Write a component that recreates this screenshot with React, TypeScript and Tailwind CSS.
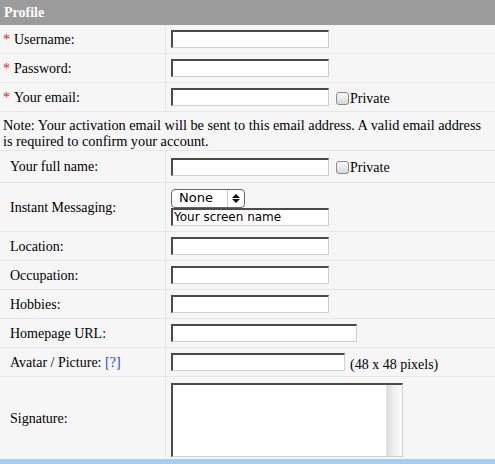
import React from "react";

const serif = { fontFamily: '"Liberation Serif", "Times New Roman", serif' };
const sans = { fontFamily: '"DejaVu Sans", "Liberation Sans", sans-serif' };

function Input({ w = 158, children }: { w?: number; children?: React.ReactNode }) {
  return (
    <div
      className="h-[18px] bg-white border border-t-[#4a4a4a] border-l-[#4a4a4a] border-b-[#cfcfcf] border-r-[#cfcfcf] border-t-2 border-l-2 text-[12px] leading-[14px] pl-[1px] text-black"
      style={{ width: w, ...sans }}
    >
      {children}
    </div>
  );
}

function Private() {
  return (
    <div className="flex items-center ml-[7px] mt-[2px]">
      <div className="w-[13px] h-[13px] rounded-[3px] border border-[#8a8a8a] bg-gradient-to-b from-[#fafafa] to-[#d8d8d8]" />
      <span className="ml-[1px] text-[14px] text-black" style={serif}>Private</span>
    </div>
  );
}

function Row({
  label,
  req,
  h = 29,
  children,
}: {
  label: React.ReactNode;
  req?: boolean;
  h?: number;
  children: React.ReactNode;
}) {
  return (
    <div className="grid grid-cols-[166px_1fr] border-b border-[#e7e7e7]" style={{ height: h }}>
      <div
        className={`flex items-center border-r border-[#e7e7e7] ${req ? "pl-[3px]" : "pl-[10px]"} text-[14px] text-black`}
        style={serif}
      >
        {req && <span className="text-[#e0201a] mr-[4px]">*</span>}
        {label}
      </div>
      <div className="flex items-center pl-[5px]">{children}</div>
    </div>
  );
}

export default function App() {
  return (
    <div className="w-[495px] h-[464px] bg-[#f6f6f6] overflow-hidden" style={serif}>
      <div className="h-[25px] bg-[#9b9b9b] flex items-center pl-[4px] text-white font-bold text-[14px]">Profile</div>
      <Row label="Username:" req>
        <Input />
      </Row>
      <Row label="Password:" req>
        <Input />
      </Row>
      <Row label="Your email:" req>
        <Input />
        <Private />
      </Row>
      <div className="h-[39px] border-b border-[#e7e7e7] pl-[3px] pr-[10px] pt-[5px] text-[14.3px] leading-[16px] text-black">
        Note: Your activation email will be sent to this email address. A valid email address is required to confirm your account.
      </div>
      <Row label="Your full name:" h={32}>
        <Input />
        <Private />
      </Row>
      <Row label="Instant Messaging:" h={49}>
        <div className="flex flex-col">
          <div
            className="w-[74px] h-[19px] rounded-[4px] border border-[#666] bg-white flex items-center text-[13px] text-black"
            style={sans}
          >
            <span className="pl-[7px] w-[55px]">None</span>
            <div className="h-full border-l border-[#ccc] flex-1 flex flex-col items-center justify-center gap-[1px]">
              <svg width="8" height="4" viewBox="0 0 8 4"><path d="M0 4 L4 0 L8 4 Z" fill="#111" /></svg>
              <svg width="8" height="4" viewBox="0 0 8 4"><path d="M0 0 L4 4 L8 0 Z" fill="#111" /></svg>
            </div>
          </div>
          <Input>Your screen name</Input>
        </div>
      </Row>
      <Row label="Location:">
        <Input />
      </Row>
      <Row label="Occupation:">
        <Input />
      </Row>
      <Row label="Hobbies:">
        <Input />
      </Row>
      <Row label="Homepage URL:">
        <Input w={186} />
      </Row>
      <Row
        label={
          <span>
            Avatar / Picture: <span className="text-[#2b3fe0]">[?]</span>
          </span>
        }
      >
        <Input w={174} />
        <span className="ml-[5px] mt-[4px] text-[14px] text-black">(48 x 48 pixels)</span>
      </Row>
      <div className="grid grid-cols-[166px_1fr] h-[82px]">
        <div className="flex items-center pl-[10px] border-r border-[#e7e7e7] text-[14px] text-black">Signature:</div>
        <div className="pl-[5px] pt-[6px]">
          <div className="w-[232px] h-[74px] bg-white border-t-2 border-l-2 border-t-[#4a4a4a] border-l-[#4a4a4a] border-b border-r border-b-[#cfcfcf] border-r-[#cfcfcf] flex justify-end">
            <div className="w-[16px] h-full bg-gradient-to-r from-[#dcdcdc] via-[#f2f2f2] to-[#fafafa] border-l border-[#e4e4e4]" />
          </div>
        </div>
      </div>
      <div className="h-[6px] bg-[#a6cdf2]" />
    </div>
  );
}
